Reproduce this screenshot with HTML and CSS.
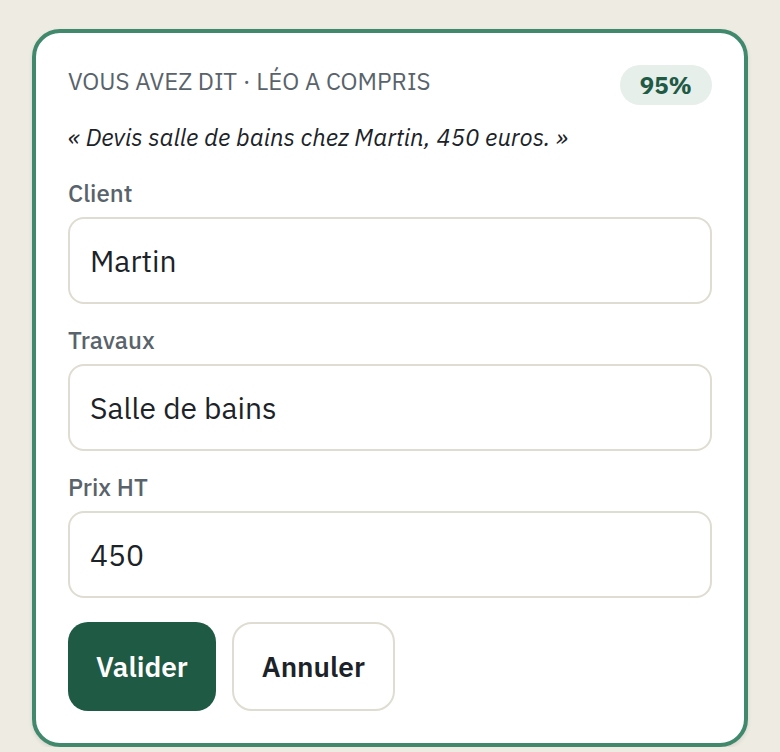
FILE: index.html
```html
<!DOCTYPE html>
<html lang="fr">
<head>
    <meta charset="UTF-8">
    <meta name="viewport" content="width=device-width, initial-scale=1.0">
    <title>Léo - Devis</title>
    <link rel="stylesheet" href="styles.css">
</head>
<body>
    <form class="card">
        <div class="card-head">
            <span class="card-title">VOUS AVEZ DIT · LÉO A COMPRIS</span>
            <span class="score">95%</span>
        </div>
        <p class="quote">« Devis salle de bains chez Martin, 450 euros. »</p>

        <div class="field">
            <label for="client">Client</label>
            <input type="text" id="client" value="Martin">
        </div>
        <div class="field">
            <label for="travaux">Travaux</label>
            <input type="text" id="travaux" value="Salle de bains">
        </div>
        <div class="field">
            <label for="prix">Prix HT</label>
            <input type="text" id="prix" inputmode="decimal" value="450">
        </div>

        <div class="actions">
            <button type="submit" class="btn btn-primary">Valider</button>
            <button type="button" class="btn btn-secondary">Annuler</button>
        </div>
    </form>
</body>
</html>
```
FILE: styles.css
```css
* {
    box-sizing: border-box;
}
body {
    margin: 0;
    padding: 29px 32px 0;
    background: #eeebe3;
    color: #1c2328;
    font-family: "IBM Plex Sans", Inter, "Liberation Sans", sans-serif;
}
.card {
    padding: 32px;
    background: #fff;
    border: 4px solid #40896c;
    border-radius: 28px;
    box-shadow: 0 2px 4px rgba(0, 0, 0, 0.1);
}
.card-head {
    display: flex;
    justify-content: space-between;
    align-items: flex-start;
}
.card-title {
    font-size: 24px;
    line-height: 32px;
    color: #59636b;
}
.score {
    padding: 0 20px;
    border-radius: 20px;
    background: #e6efea;
    color: #1f5a45;
    font-size: 24px;
    font-weight: 700;
    line-height: 40px;
}
.quote {
    margin: 16px 0 24px;
    font-size: 24px;
    font-style: italic;
    line-height: 32px;
}
.field {
    margin-bottom: 20px;
}
.field label {
    display: block;
    margin-bottom: 8px;
    color: #59636b;
    font-size: 24px;
    font-weight: 500;
    line-height: 32px;
}
.field input {
    display: block;
    width: 100%;
    height: 87px;
    padding: 0 20px;
    border: 2px solid #dfdcd1;
    border-radius: 16px;
    background: #fff;
    color: inherit;
    font-family: inherit;
    font-size: 30px;
}
.actions {
    display: flex;
    gap: 16px;
    margin-top: 24px;
}
.btn {
    height: 89px;
    padding: 0 28px;
    border: none;
    border-radius: 20px;
    font-family: inherit;
    font-size: 28px;
    font-weight: 600;
}
.btn-primary {
    background: #1f5a45;
    color: #fff;
}
.btn-secondary {
    background: #fff;
    border: 2px solid #dfdcd1;
    color: #1c2328;
}
```
